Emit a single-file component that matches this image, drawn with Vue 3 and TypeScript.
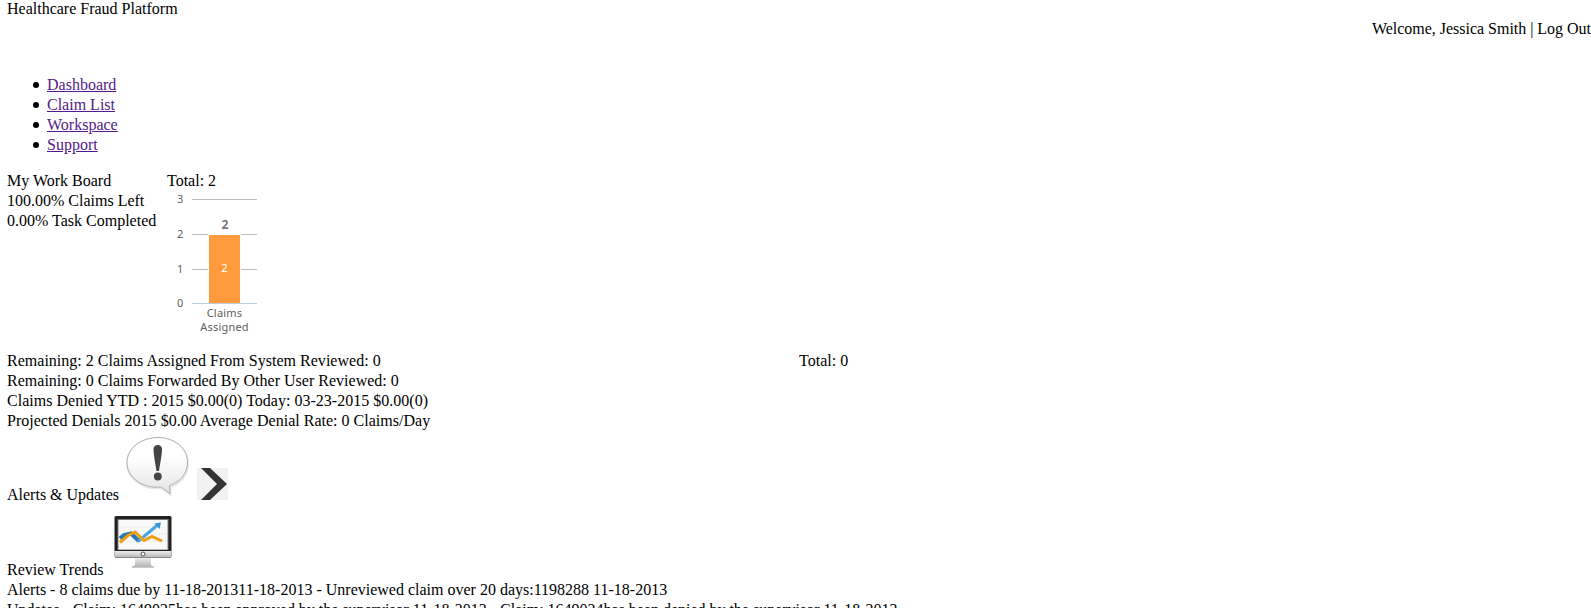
<script setup lang="ts">
interface Tick {
  value: number
  y: number
}

const links: string[] = ['Dashboard', 'Claim List', 'Workspace', 'Support']
const ticks: Tick[] = [
  { value: 3, y: 14.5 },
  { value: 2, y: 49.5 },
  { value: 1, y: 84.5 },
  { value: 0, y: 118.5 },
]
</script>

<template>
  <div class="page">
    <header>
      <div class="line">Healthcare Fraud Platform</div>
      <div class="line user">Welcome, Jessica Smith | Log Out</div>
    </header>
    <ul class="nav">
      <li v-for="link in links" :key="link"><a href="#">{{ link }}</a></li>
    </ul>
    <section class="board">
      <div class="summary">
        <div class="line">My Work Board</div>
        <div class="line">100.00% Claims Left</div>
        <div class="line">0.00% Task Completed</div>
      </div>
      <div>
        <div class="line">Total: 2</div>
        <svg class="chart" width="110" height="158" viewBox="0 6 110 158">
          <g v-for="tick in ticks" :key="tick.value">
            <path :d="`M25 ${tick.y}H90`" :stroke="tick.value ? '#c0c0c0' : '#c0d0e0'" />
            <text class="tick" x="16.500" :y="tick.y + 3.5" text-anchor="end">{{ tick.value }}</text>
          </g>
          <rect x="41" y="49" width="33" height="70" fill="#fff" />
          <rect x="42" y="50" width="31" height="68" fill="#ff9b3c" />
          <path d="M41 118.500H74" stroke="#c0d0e0" />
          <text class="total" x="58" y="43.500" text-anchor="middle">2</text>
          <text class="value" x="57.500" y="87" text-anchor="middle">2</text>
          <text class="tick" x="57.500" y="132" text-anchor="middle">Claims</text>
          <text class="tick" x="57.500" y="146" text-anchor="middle">Assigned</text>
        </svg>
      </div>
    </section>
    <section class="stats">
      <div>
        <div class="line">Remaining: 2 Claims Assigned From System Reviewed: 0</div>
        <div class="line">Remaining: 0 Claims Forwarded By Other User Reviewed: 0</div>
        <div class="line">Claims Denied YTD : 2015 $0.00(0) Today: 03-23-2015 $0.00(0)</div>
        <div class="line">Projected Denials 2015 $0.00 Average Denial Rate: 0 Claims/Day</div>
      </div>
      <div class="line">Total: 0</div>
    </section>
    <div class="icon-row alerts">
      <span>Alerts &amp; Updates</span>
      <svg class="bubble" width="66" height="62" viewBox="0 0 66 62">
        <defs>
          <linearGradient id="bubble-fill" x2="0" y2="1">
            <stop offset=".35" stop-color="#fff" />
            <stop offset="1" stop-color="#e4e4e4" />
          </linearGradient>
        </defs>
        <path d="M33 2C49 2 63 13 63 27C63 39 55 48 45.500 50.500L45.500 58.500L36 52C17 54 2 42 2 27C2 13 16 2 33 2Z" fill="none" stroke="#e6e6e6" stroke-width="2" />
        <path d="M33 1.500C49 1.500 62.500 12 62.500 26C62.500 38 55 46 44.500 49.500L45 57.500L36 51C17 53 2 41 2 26.500C2 12.500 16 1.500 33 1.500Z" fill="url(#bubble-fill)" stroke="#b0b0b0" />
        <path d="M28.500 13C28.500 7.500 37 7.500 37 13C37 19 35 28 34 35H31.500C30.500 28 28.500 19 28.500 13Z" fill="#444" />
        <circle cx="32.800" cy="40.500" r="3.900" fill="#444" />
      </svg>
      <svg class="next" width="31" height="32" viewBox="0 0 31 32">
        <path d="M0 0H31V32H0Z" fill="#f2f2f2" />
        <path d="M4 0H13L30 16L13 32H4L20 16Z" fill="#333" />
      </svg>
    </div>
    <div class="icon-row trends">
      <span>Review Trends</span>
      <svg class="monitor" width="58" height="54" viewBox="0 0 58 54">
        <defs>
          <linearGradient id="metal" x2="0" y2="1">
            <stop stop-color="#eee" />
            <stop offset="1" stop-color="#b5b5b5" />
          </linearGradient>
        </defs>
        <rect x=".5" y="1" width="57" height="41" rx="1.500" fill="#222" />
        <rect x="3.500" y="4" width="51" height="31" fill="#777" />
        <rect x="4.500" y="5" width="49" height="29.500" fill="#f9f9f9" />
        <path d="M5 12H53M5 19H53M5 26H53" stroke="#eee" />
        <path d="M6 23.500L10 20L17 18.500L25 26" fill="none" stroke="#2877ae" stroke-width="4" />
        <path d="M24 26.500L43 10.500" stroke="#49a5df" stroke-width="3" />
        <path d="M40.500 8.500L47 7.500L45.500 14Z" fill="#3695d2" />
        <path d="M6 27.500L14 20.500L21 17L30 25.500L38 21.500L48 26" fill="none" stroke="#ed9e13" stroke-width="3" />
        <path d="M.5 36H57.500V41Q57.500 42.500 56 42.500H2Q.5 42.500 .5 41Z" fill="url(#metal)" />
        <path d="M1 42.500H57" stroke="#888" />
        <circle cx="29" cy="39" r="2" fill="#fff" stroke="#555" />
        <path d="M21 43H37V50L39 51.500H19L21 50Z" fill="url(#metal)" />
        <path d="M18 52H40" stroke="#999" />
      </svg>
    </div>
    <div class="line">Alerts - 8 claims due by 11-18-201311-18-2013 - Unreviewed claim over 20 days:1198288 11-18-2013</div>
    <div class="line updates">Updates - Claim: 1649025has been approved by the supervisor 11-18-2013 - Claim: 1649024has been denied by the supervisor 11-18-2013</div>
  </div>
</template>

<style>
body {
  margin: 0;
  background: #fff;
  overflow: hidden;
}
</style>

<style scoped>
.page {
  box-sizing: border-box;
  height: 608px;
  overflow: hidden;
  padding-left: 7px;
  color: #000;
  font: 16px/20px "Liberation Serif", "Times New Roman", serif;
  white-space: nowrap;
}
.line {
  height: 20px;
}
.user {
  text-align: right;
  letter-spacing: -0.02px;
}
.nav {
  margin: 35px 0 16px;
  padding-left: 40px;
  list-style: none;
}
.nav li {
  position: relative;
}
.nav li::before {
  content: "";
  position: absolute;
  left: -14px;
  top: 7px;
  width: 6px;
  height: 6px;
  border-radius: 50%;
  background: #000;
}
.nav a {
  color: #551a8b;
  text-decoration: underline;
}
header {
  margin-top: -1px;
  padding-bottom: 1px;
}
.board {
  display: flex;
  height: 180px;
}
.summary {
  width: 160px;
}
.chart {
  display: block;
}
.tick,
.value,
.total {
  font: 11px "Noto Sans", "Open Sans", sans-serif;
  letter-spacing: 0.2px;
  fill: #606060;
}
.value {
  fill: #fff;
}
.total {
  font-size: 12px;
  font-weight: 700;
  fill: #777;
}
.stats {
  display: grid;
  grid-template-columns: 792px 1fr;
  letter-spacing: 0.015px;
}
.icon-row {
  display: flex;
  align-items: flex-end;
}
.alerts {
  height: 74px;
}
.trends {
  height: 75px;
}
.bubble {
  margin: 0 0 7px 6px;
}
.next {
  margin: 0 0 5px 6px;
}
.monitor {
  margin: 0 0 11px 11px;
}
.updates {
  letter-spacing: -0.012px;
}
</style>
